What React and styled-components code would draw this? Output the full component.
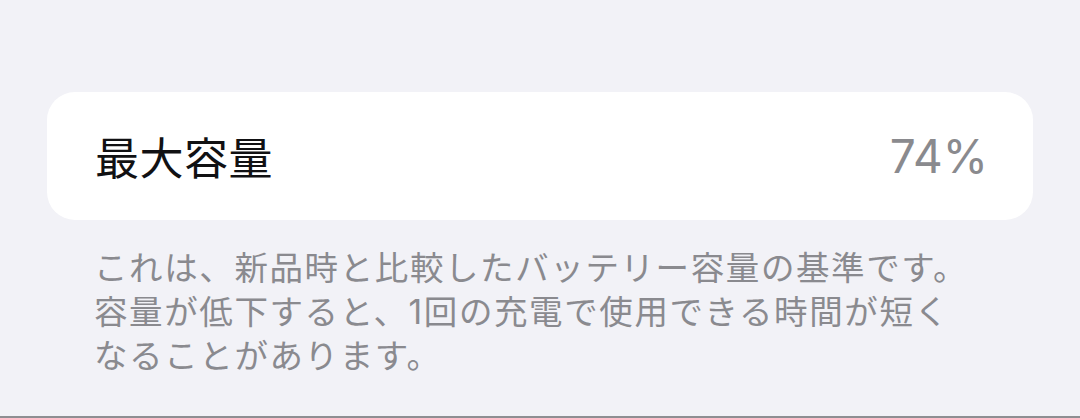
import React from 'react'
import styled, { createGlobalStyle } from 'styled-components'

const GlobalStyle = createGlobalStyle`
    html, body {
        margin:0;
        padding:0;
        background:#f2f2f7;
    }
    body {
        font-family: Inter, "Noto Sans CJK JP", sans-serif;
        -webkit-font-smoothing: antialiased;
    }
`

const Page = styled.div`
    height:418px;
    box-sizing:border-box;
    padding:92px 47px 0;
    border-bottom:2px solid #8e8e92;
    display:flex;
    flex-direction:column;
`

const Card = styled.div`
    background:#ffffff;
    border-radius:28px;
    height:128px;
    padding:0 45px 0 48px;
    display:flex;
    align-items:center;
    justify-content:space-between;
`

const Label = styled.span`
    font-family: "Noto Sans CJK JP", sans-serif;
    font-size:44px;
    color:#111113;
    letter-spacing:0.5px;
`

const Value = styled.span`
    font-family: Inter, "Liberation Sans", sans-serif;
    font-size:46px;
    color:#8a8a8e;
    letter-spacing:0px;
`

const Footer = styled.p`
    margin:26px 0 0;
    padding-left:47px;
    font-family: Inter, "Noto Sans CJK JP", sans-serif;
    font-size:33.5px;
    line-height:44px;
    color:#8a8a8f;
    letter-spacing:1.6px;
`

const lines = [
    'これは、新品時と比較したバッテリー容量の基準です。',
    '容量が低下すると、1回の充電で使用できる時間が短く',
    'なることがあります。',
]

export default function App() {
    return (
        <>
            <GlobalStyle />
            <Page>
                <Card>
                    <Label>最大容量</Label>
                    <Value>74%</Value>
                </Card>
                <Footer>
                    {lines.map((l, i) => (
                        <React.Fragment key={i}>
                            {l}
                            {i < lines.length - 1 && <br />}
                        </React.Fragment>
                    ))}
                </Footer>
            </Page>
        </>
    )
}
